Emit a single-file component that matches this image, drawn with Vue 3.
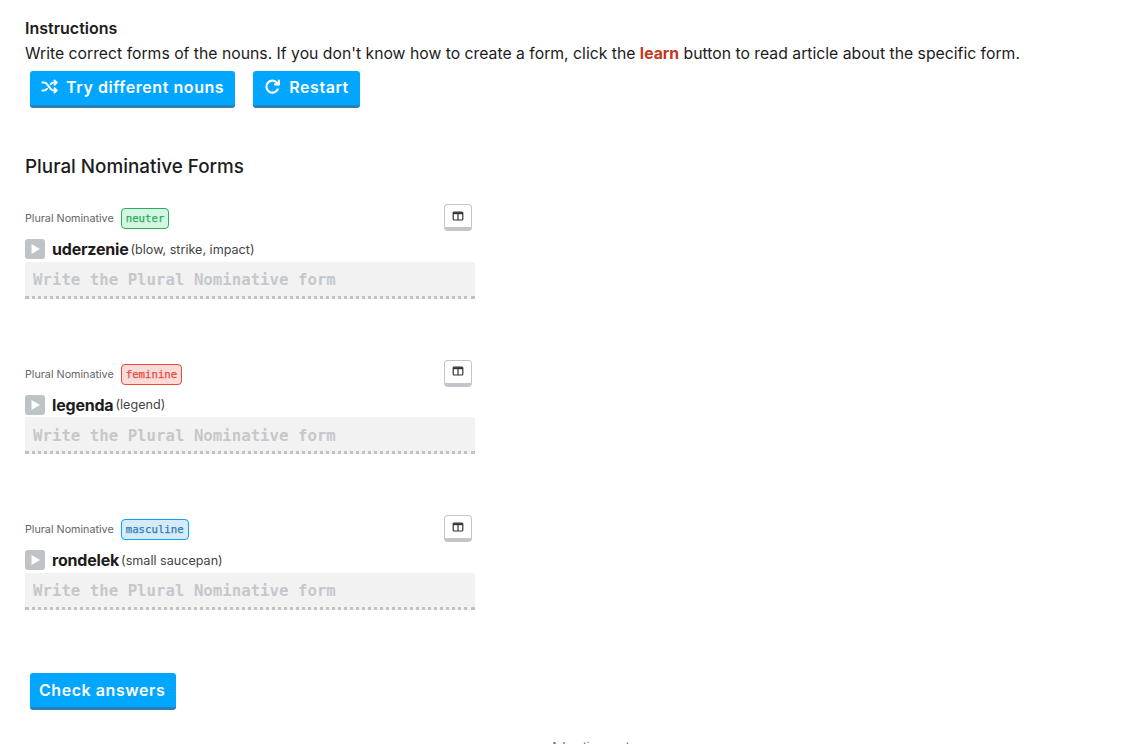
<script setup>
const items = [
  { word: 'uderzenie', meaning: '(blow, strike, impact)', gender: 'neuter' },
  { word: 'legenda', meaning: '(legend)', gender: 'feminine' },
  { word: 'rondelek', meaning: '(small saucepan)', gender: 'masculine' },
]
</script>

<template>
  <main class="page">
    <h2 class="instr-title">Instructions</h2>
    <p class="instr">Write correct forms of the nouns. If you don't know how to create a form, click the <b class="learn">learn</b> button to read article about the specific form.</p>
    <div class="actions">
      <button class="btn">
        <svg class="ico" viewBox="0 0 24 24" fill="none" stroke="currentColor" stroke-width="2.800" stroke-linecap="round" stroke-linejoin="round"><path d="M2 6.500h2.500c2 0 3 1 4.200 2.600l4.600 6c1.200 1.500 2.200 2.400 4.200 2.400H22"/><path d="M2 17.500h2.500c2 0 3-1 4-2.300M13.800 8.800C15 7.300 15.800 6.500 17.500 6.500H22"/><path d="M19 3.500l3 3-3 3M19 14.500l3 3-3 3"/></svg>
        Try different nouns
      </button>
      <button class="btn">
        <svg class="ico" viewBox="0 0 24 24" fill="none" stroke="currentColor" stroke-width="3" stroke-linecap="round" stroke-linejoin="round"><path d="M19.500 16A8.500 8.500 0 1 1 18.500 6.800L21 9"/><path d="M21 3.500V9h-5.500"/></svg>
        Restart
      </button>
    </div>

    <h3 class="heading">Plural Nominative Forms</h3>

    <section v-for="it in items" :key="it.word" class="card">
      <div class="meta">
        <span class="label">Plural Nominative</span>
        <span class="tag" :class="it.gender">{{ it.gender }}</span>
        <button class="tbl" aria-label="table">
          <svg viewBox="0 0 12 12" width="12" height="12" fill="none" stroke="#333" stroke-width="1.200"><rect x="1.200" y="2" width="9.600" height="8" rx="1"/><path d="M6 4v6"/><path d="M1.200 3.200h9.600" stroke-width="2"/></svg>
        </button>
      </div>
      <div class="word-row">
        <span class="play"><svg viewBox="0 0 20 20" width="20" height="20"><path d="M6.500 5l8.500 5-8.500 5z" fill="#fff"/></svg></span>
        <span class="word">{{ it.word }}</span>
        <span class="meaning">{{ it.meaning }}</span>
      </div>
      <input class="answer" type="text" placeholder="Write the Plural Nominative form" />
    </section>

    <button class="btn check">Check answers</button>
    <div class="ad">Advertisement</div>
  </main>
</template>

<style scoped>
.page {
  box-sizing: border-box;
  height: 744px;
  overflow: hidden;
  padding: 19px 25px 0;
  font-family: Inter, "Liberation Sans", sans-serif;
  color: #1c1c1c;
}
.instr-title { margin: 0; font-size: 16px; line-height: 19px; font-weight: 600; }
.instr { margin: 6px 0 0; font-size: 15.750px; line-height: 19px; }
.learn { color: #c0391b; font-weight: 700; }
.actions { display: flex; gap: 18px; margin: 8px 0 0 5px; }
.btn {
  display: inline-flex; align-items: center; gap: 8px;
  height: 37px; padding: 0 11px 3px; box-sizing: border-box;
  background: #00a6ff; color: #fff; border: 0; border-bottom: 3px solid #2a80b9;
  border-radius: 3px;
  font: 600 16px Inter, "Liberation Sans", sans-serif; letter-spacing: .56px;
}
.ico { width: 17px; height: 17px; }
.heading { margin: 47px 0 0; font-size: 18.850px; line-height: 24px; font-weight: 500; }
.card { width: 450px; height: 155.700px; }
.meta { display: flex; align-items: center; height: 27px; position: relative; }
.page > .heading + .card { margin-top: 26px; }
.label { font-size: 10.750px; color: #5f656c; }
.tag {
  margin-left: 7px; padding: 0 4px; height: 19px;
  border: 1px solid; border-radius: 4px;
  font: 400 10.700px/19px "DejaVu Sans Mono", monospace;
  -webkit-text-stroke: .25px currentColor;
}
.neuter { background: #d5f5e3; border-color: #27ae60; color: #27ae60; }
.feminine { background: #fadbd8; border-color: #e74c3c; color: #e74c3c; }
.masculine { background: #d6eaf8; border-color: #00a6ff; color: #2a80b9; }
.tbl {
  position: absolute; right: 3px; top: -1px;
  width: 28px; height: 27px; padding: 0 0 1px; box-sizing: border-box;
  display: flex; align-items: center; justify-content: center;
  background: #fff; border: 1px solid #c3c6c9; border-bottom: 4px solid #c3c6c9; border-radius: 4px;
}
.word-row { display: flex; align-items: center; margin-top: 7px; height: 20px; }
.play { width: 20px; height: 20px; background: #bdc3c7; border-radius: 3px; display: block; }
.word { margin-left: 7px; font-size: 16px; font-weight: 700; letter-spacing: -.2px; }
.meaning { margin-left: 2px; font-size: 12.600px; color: #444; }
.answer {
  display: block; box-sizing: border-box; width: 450px; height: 37px; margin-top: 2.500px;
  padding: 2px 8px 0; background: #f2f2f2; border: 0; border-bottom: 3px dotted #bdc3c7;
  border-radius: 3px 3px 0 0; outline: 0;
  font: 700 15.730px "DejaVu Sans Mono", monospace; color: #333;
}
.answer::placeholder { color: #c5c8cb; opacity: 1; }
.check { margin: 1px 0 0 5px; padding: 0 11px 1px 9px; }
.ad { margin-top: 30px; text-align: center; font-size: 11.500px; color: #555; width: 1130px; }
</style>

<style>
html, body { margin: 0; overflow: hidden; background: #fff; }
</style>
